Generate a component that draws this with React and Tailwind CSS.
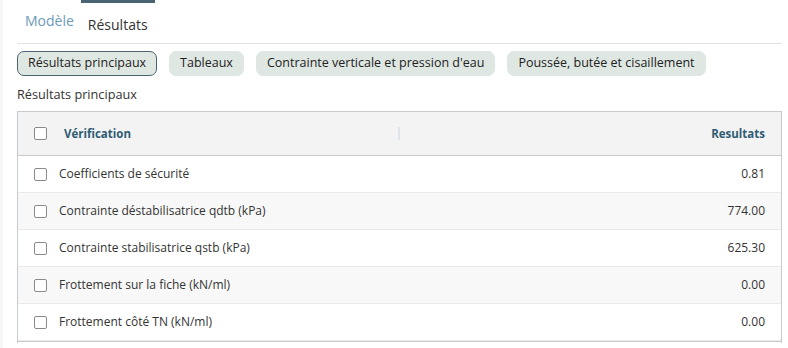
import React, { useState } from 'react';

const SUB_TABS = [
  'Résultats principaux',
  'Tableaux',
  "Contrainte verticale et pression d'eau",
  'Poussée, butée et cisaillement',
];

const ROWS = [
  { label: 'Coefficients de sécurité', value: '0.81' },
  { label: 'Contrainte déstabilisatrice qdtb (kPa)', value: '774.00' },
  { label: 'Contrainte stabilisatrice qstb (kPa)', value: '625.30' },
  { label: 'Frottement sur la fiche (kN/ml)', value: '0.00' },
  { label: 'Frottement côté TN (kN/ml)', value: '0.00' },
];

const Box = () => (
  <span className="block h-[13px] w-[13px] shrink-0 rounded-[2px] border border-[#8a8a8a] bg-white" />
);

export default function App() {
  const [tab, setTab] = useState('Résultats');
  const [sub, setSub] = useState(SUB_TABS[0]);

  return (
    <div className="flex h-[348px] w-[788px] bg-white font-['Open_Sans',sans-serif] text-[#333]">
      <div className="w-[3px] shrink-0 bg-[#f6f6f6]" />
      <div className="flex min-w-0 flex-1 flex-col pl-[14px] pr-[6px]">
        {/* Main tabs */}
        <div className="flex h-[44px] border-b border-[#e3e3e3] pl-[8px]">
          {['Modèle', 'Résultats'].map((t) => (
            <button
              key={t}
              onClick={() => setTab(t)}
              className={
                tab === t
                  ? 'flex h-full items-center border-t-[3px] border-[#4b6473] px-[7px] pt-[2px] text-[14px] text-[#333]'
                  : 'flex h-full items-center pr-[7px] pb-[2px] text-[14px] text-[#6c9bbb]'
              }
            >
              {t}
            </button>
          ))}
        </div>

        {/* Sub tabs */}
        <div className="mt-[7px] flex gap-[12px]">
          {SUB_TABS.map((s) => (
            <button
              key={s}
              onClick={() => setSub(s)}
              className={
                sub === s
                  ? 'h-[25px] rounded-[7px] border border-[#4b6473] bg-[#dfe7e3] px-[10px] text-[12.5px] text-[#222]'
                  : 'h-[25px] rounded-[7px] border border-[#dfe7e3] bg-[#dfe7e3] px-[10px] text-[12.5px] text-[#222]'
              }
            >
              {s}
            </button>
          ))}
        </div>

        <div className="mt-[9px] text-[12.7px] leading-[18px] text-[#333]">{sub}</div>

        {/* Table */}
        <div className="mt-[8px] border-x border-t border-[#c8cacd]">
          <div className="flex h-[44px] items-center border-b border-[#c8cacd] bg-[#f3f3f3] pl-[16px] pr-[16px]">
            <Box />
            <span className="ml-[17px] w-[334px] text-[11.5px] font-bold text-[#2f5c74]">Vérification</span>
            <span className="h-[13px] w-[2px] bg-[#dfe4ea]" />
            <span className="flex-1 text-right text-[11.5px] font-bold text-[#2f5c74]">Resultats</span>
          </div>
          {ROWS.map((r, i) => (
            <div
              key={r.label}
              className={
                i % 2 === 1
                  ? 'flex h-[37px] items-center border-b border-[#e8ebee] bg-[#f8f8f8] pl-[16px] pr-[16px]'
                  : 'flex h-[37px] items-center border-b border-[#e8ebee] bg-white pl-[16px] pr-[16px]'
              }
            >
              <Box />
              <span className="ml-[12px] flex-1 text-[12px] text-[#333]">{r.label}</span>
              <span className="text-[12px] text-[#333]">{r.value}</span>
            </div>
          ))}
          <div className="h-[2px] border-t border-[#c8cacd]" />
        </div>
      </div>
    </div>
  );
}
